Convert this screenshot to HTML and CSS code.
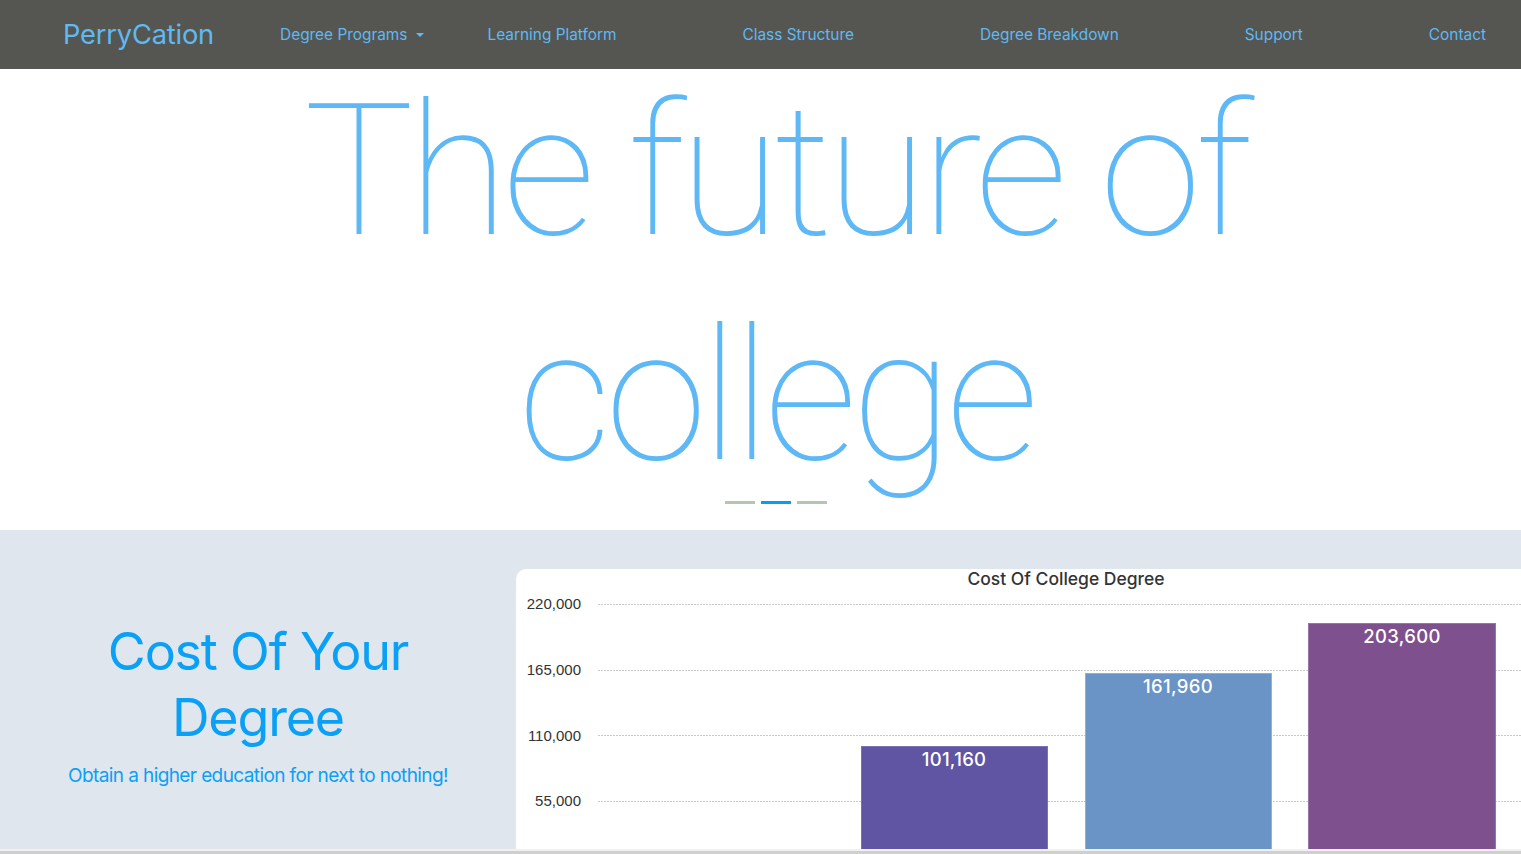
FILE: index.html
```html
<!DOCTYPE html>
<html lang="en">
<head>
<meta charset="utf-8">
<title>PerryCation</title>
<link rel="stylesheet" href="styles.css">
</head>
<body>
<nav class="navbar">
  <a class="brand" href="#">PerryCation</a>
  <ul class="nav-list">
    <li class="nav-item dropdown"><a href="#">Degree Programs</a><span class="caret"></span></li>
    <li class="nav-rest">
      <a href="#">Learning Platform</a>
      <a href="#">Class Structure</a>
      <a href="#">Degree Breakdown</a>
      <a href="#">Support</a>
      <a href="#">Contact</a>
    </li>
  </ul>
</nav>

<header class="hero">
  <h1 class="hero-title">The future of<br>college</h1>
  <div class="indicators">
    <span class="ind"></span>
    <span class="ind active"></span>
    <span class="ind"></span>
  </div>
</header>

<section class="cost">
  <div class="cost-info">
    <h2 class="cost-title">Cost Of Your Degree</h2>
    <p class="cost-sub">Obtain a higher education for next to nothing!</p>
  </div>
  <div class="chart-card">
    <svg class="chart" width="1005" height="280" viewBox="0 0 1005 280">
      <text class="chart-title" x="550" y="16" text-anchor="middle">Cost Of College Degree</text>
      <g class="grid">
        <line x1="82" y1="35.5" x2="1005" y2="35.5"/>
        <line x1="82" y1="101.5" x2="1005" y2="101.5"/>
        <line x1="82" y1="166.5" x2="1005" y2="166.5"/>
        <line x1="82" y1="232.5" x2="1005" y2="232.5"/>
      </g>
      <g class="ylabels">
        <text x="65" y="40" text-anchor="end">220,000</text>
        <text x="65" y="106" text-anchor="end">165,000</text>
        <text x="65" y="172" text-anchor="end">110,000</text>
        <text x="65" y="237" text-anchor="end">55,000</text>
      </g>
      <rect x="345.5" y="177.5" width="186" height="130" fill="#5f55a3" stroke="#7a72b6"/>
      <rect x="569.5" y="104.5" width="186" height="200" fill="#6a93c6" stroke="#8eb0da"/>
      <rect x="792.5" y="54.5" width="187" height="250" fill="#7f508e" stroke="#9a74a8"/>
      <g class="barlabels">
        <text x="438" y="197" text-anchor="middle">101,160</text>
        <text x="662" y="124" text-anchor="middle">161,960</text>
        <text x="886" y="74" text-anchor="middle">203,600</text>
      </g>
    </svg>
  </div>
</section>
<div class="bottom-edge"></div>
</body>
</html>
```

FILE: styles.css
```css
html, body {
  margin: 0;
  padding: 0;
}
body {
  font-family: Inter, "Noto Sans", "Liberation Sans", sans-serif;
  background: #ffffff;
  overflow: hidden;
}
a { text-decoration: none; }

.navbar {
  display: flex;
  align-items: center;
  height: 69px;
  background: #555651;
  padding: 0 35px 0 63px;
  box-sizing: border-box;
}
.brand {
  color: #5fb9f3;
  font-size: 27.3px;
  font-weight: 400;
  letter-spacing: -0.2px;
}
.nav-list {
  list-style: none;
  margin: 0 0 0 66px;
  padding: 0;
  display: flex;
  flex: 1;
  align-items: center;
}
.nav-item a, .nav-rest a {
  color: #5fb9f3;
  font-size: 15.4px;
}
.dropdown {
  display: flex;
  align-items: center;
}
.caret {
  display: inline-block;
  margin-left: 9px;
  width: 0;
  height: 0;
  border-left: 4px solid transparent;
  border-right: 4px solid transparent;
  border-top: 4px solid #5fb9f3;
}
.nav-rest {
  flex: 1;
  display: flex;
  justify-content: space-between;
  margin-left: 63px;
}

.hero {
  height: 461px;
  text-align: center;
  padding-left: 30px;
  box-sizing: border-box;
  display: flex;
  flex-direction: column;
  align-items: center;
}
.hero-title {
  margin: -10px 0 0;
  white-space: nowrap;
  font-family: Roboto, Inter, sans-serif;
  font-size: 184px;
  line-height: 225px;
  font-weight: 100;
  color: #5db8f5;
  letter-spacing: -6px;
}
.indicators {
  display: flex;
  gap: 6px;
  margin-top: -8px;
}
.ind {
  width: 30px;
  height: 3px;
  background: #b1c7b1;
}
.ind.active { background: #0a9cf2; }

.cost {
  background: #dfe6ee;
  padding-top: 39px;
  height: 319px;
  box-sizing: border-box;
  display: flex;
}
.cost-info {
  width: 516px;
  border-radius: 8px 0 0 0;
  text-align: center;
  padding: 50px 50px 0;
  box-sizing: border-box;
}
.cost-title {
  margin: 0;
  font-size: 52px;
  line-height: 66px;
  font-weight: 400;
  color: #0aa0f5;
  letter-spacing: -1.2px;
}
.cost-sub {
  margin: 13px 0 0;
  font-size: 19px;
  color: #0aa0f5;
  letter-spacing: -0.6px;
  white-space: nowrap;
}
.chart-card {
  flex: 1;
  background: #ffffff;
  border-radius: 10px 0 0 0;
  overflow: hidden;
}
.chart { display: block; }
.chart-title {
  font-family: Inter, sans-serif;
  font-size: 17.5px;
  font-weight: 500;
  fill: #333333;
}
.grid line {
  stroke: #c9c9c9;
  stroke-width: 1;
  stroke-dasharray: 2 1;
}
.ylabels text {
  font-family: "Liberation Sans", Arial, sans-serif;
  font-size: 15px;
  fill: #333333;
}
.barlabels text {
  font-family: Inter, sans-serif;
  font-size: 18.5px;
  font-weight: 500;
  letter-spacing: 0.3px;
  fill: #ffffff;
}
.bottom-edge {
  height: 2px;
  background: #f0f0f0;
  border-bottom: 3px solid #cfcfcf;
}
```
